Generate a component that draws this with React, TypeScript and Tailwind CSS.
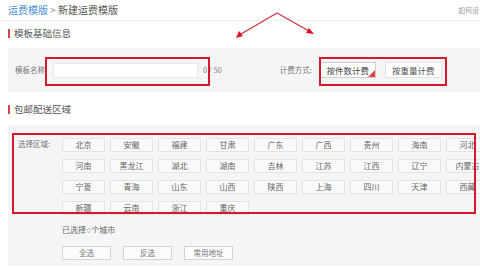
import React from "react";

const provinces = [
  ["北京", "安徽", "福建", "甘肃", "广东", "广西", "贵州", "海南", "河北"],
  ["河南", "黑龙江", "湖北", "湖南", "吉林", "江苏", "江西", "辽宁", "内蒙古"],
  ["宁夏", "青海", "山东", "山西", "陕西", "上海", "四川", "天津", "西藏"],
  ["新疆", "云南", "浙江", "重庆"],
];

const SectionTitle = ({ title }: { title: string }) => (
  <div className="flex h-[12px] items-center pl-2">
    <span className="mr-[4px] h-[9px] w-[2px] bg-[#d9434e]" />
    <span className="text-[9.5px] text-[#555]">{title}</span>
  </div>
);

const App = () => {
  return (
    <div
      className="relative h-[269px] w-[480px] overflow-hidden bg-white text-[#666]"
      style={{ fontFamily: '"Noto Sans CJK SC", "Noto Sans", sans-serif' }}
    >
      {/* Header */}
      <div className="flex h-[21px] items-center justify-between border-b border-[#f0f0f0] pl-2 pr-[1px]">
        <div className="text-[10px] leading-none">
          <span className="text-[#4a8cd6]">运费模版</span>
          <span className="text-[#888]"> &gt; </span>
          <span className="text-[#555]">新建运费模版</span>
        </div>
        <div className="whitespace-nowrap text-[7px] text-[#999]">如何设</div>
      </div>

      <div className="mt-[6px]">
        <SectionTitle title="模板基础信息" />
      </div>

      {/* Basic info panel */}
      <div className="ml-2 mt-[9px] flex h-[44px] items-center bg-[#f4f5f7]">
        <span className="w-[45px] shrink-0 pl-[7px] text-[7.5px] text-[#777]">模板名称:</span>
        <div className="h-[15px] w-[145px] shrink-0 border border-[#e8e8e8] bg-white" />
        <span className="ml-[5px] shrink-0 text-[7.5px] text-[#888]">0 / 50</span>
        <span className="ml-[58px] w-[40px] shrink-0 text-[7.5px] text-[#777]">计费方式:</span>
        <button className="relative h-[16px] w-[56px] shrink-0 border border-[#cfcfcf] bg-white text-[8.5px] text-[#444]">
          按件数计费
          <span className="absolute bottom-0 right-0 h-0 w-0 border-b-[7px] border-l-[7px] border-b-[#e0454f] border-l-transparent" />
        </button>
        <button className="ml-[9px] h-[16px] w-[57px] shrink-0 border border-[#e2e2e2] bg-white text-[8.5px] text-[#555]">
          按重量计费
        </button>
      </div>

      <div className="mt-[11px]">
        <SectionTitle title="包邮配送区域" />
      </div>

      {/* Region panel */}
      <div className="ml-2 mt-[10px] h-[141px] bg-[#f4f5f7] pt-[13px]">
        <div className="flex">
          <span className="w-[54px] shrink-0 pl-[10px] text-[7.5px] leading-[12px] text-[#777]">选择区域:</span>
          <div className="grid shrink-0 grid-cols-[repeat(9,43px)] gap-x-[5px] gap-y-[7px]">
            {provinces.flat().map((p) => (
              <div
                key={p}
                className="flex h-[14px] items-center justify-center whitespace-nowrap border border-[#e4e4e4] bg-[#f9f9f9] text-[8px] text-[#666]"
              >
                {p}
              </div>
            ))}
          </div>
        </div>
        <div className="ml-[54px] mt-[10px] flex h-[10px] items-center text-[8px] text-[#666]">
          已选择<span className="mx-[1px] text-[6px] text-[#aaa]">0</span>个城市
        </div>
        <div className="ml-[54px] mt-[11px] flex gap-[12px]">
          {["全选", "反选", "常用地址"].map((b) => (
            <button
              key={b}
              className="h-[14px] w-[49px] border border-[#d4d4d4] bg-[#fbfbfb] text-[7.5px] text-[#777]"
            >
              {b}
            </button>
          ))}
        </div>
      </div>

      {/* Annotations */}
      <div className="absolute left-[45px] top-[57px] h-[29px] w-[165px] border-2 border-[#d7182a]" />
      <div className="absolute left-[319px] top-[57px] h-[29px] w-[128px] border-2 border-[#d7182a]" />
      <div className="absolute left-[12px] top-[133px] h-[81px] w-[464px] border-2 border-[#d7182a]" />
      <svg className="absolute left-0 top-0" width="480" height="60" viewBox="0 0 480 60">
        <path d="M277 13 L241 34 M277 13 L309 31" stroke="#c8343e" strokeWidth="1.3" fill="none" />
        <path d="M236 38 L239 31 L243 36 Z" fill="#e3101f" />
        <path d="M314 34 L306 33 L309 28 Z" fill="#e3101f" />
      </svg>
    </div>
  );
};

export default App;
